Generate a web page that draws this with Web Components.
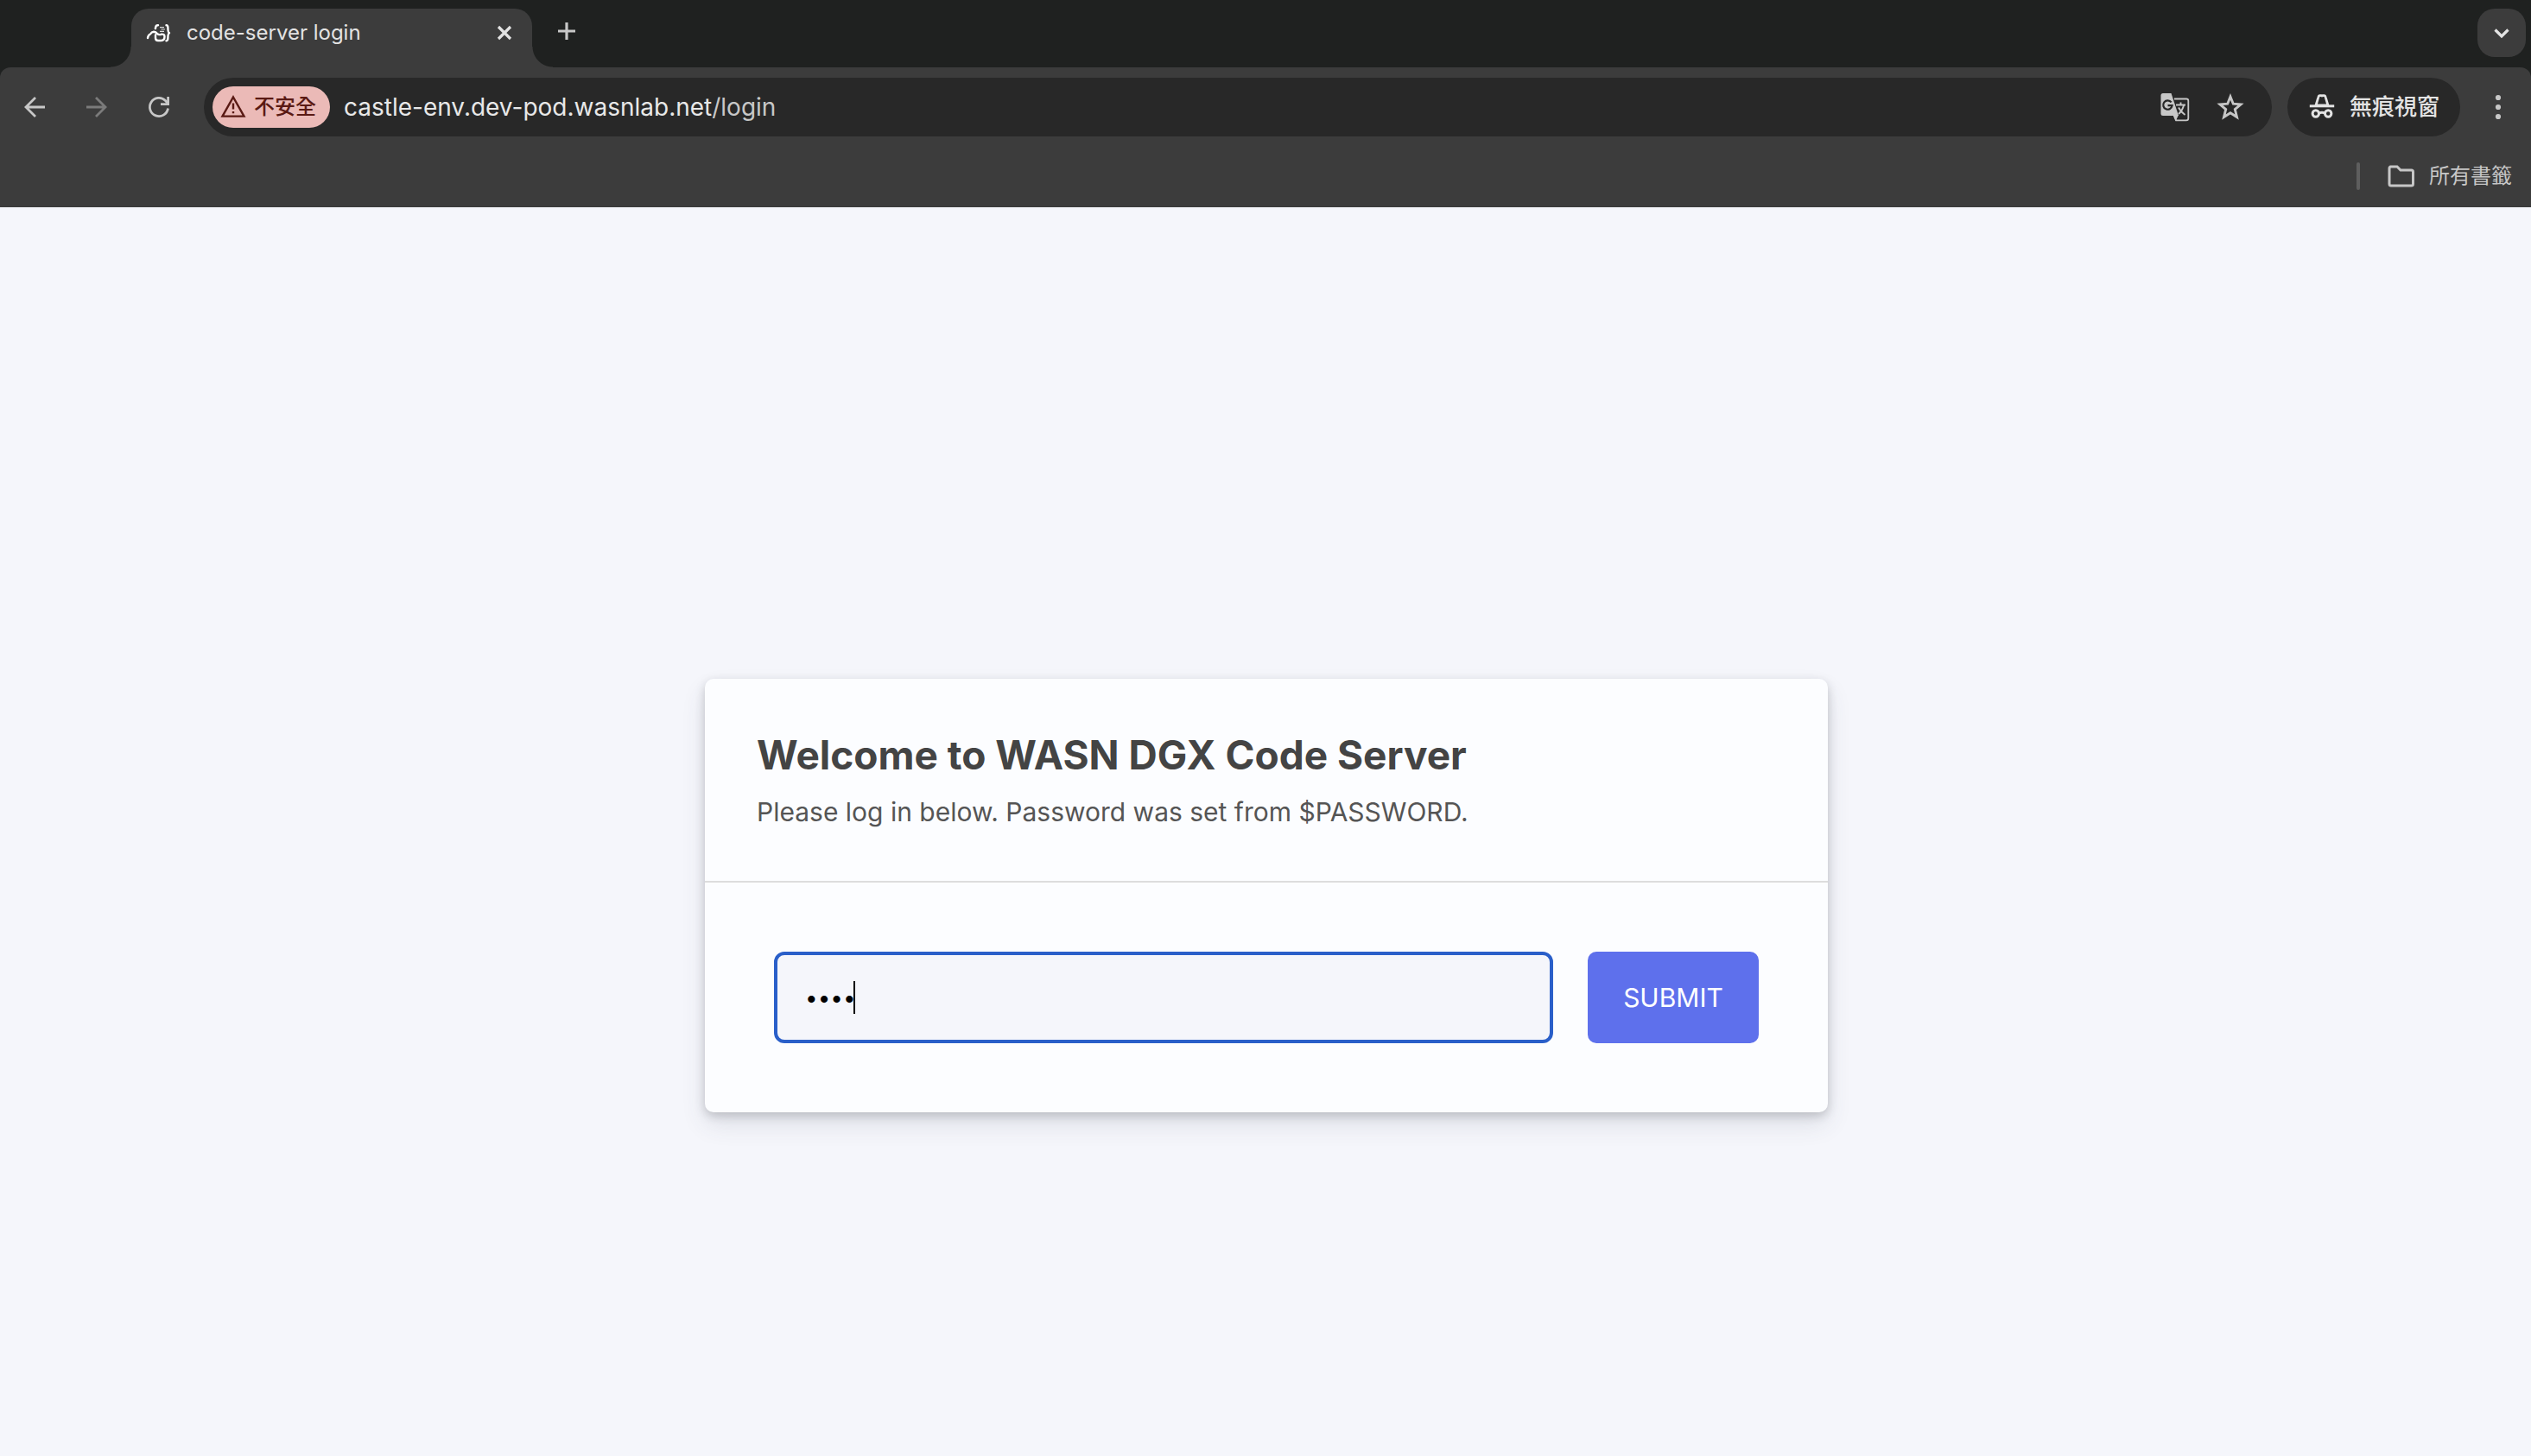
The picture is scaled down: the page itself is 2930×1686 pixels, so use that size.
<!DOCTYPE html>
<html lang="zh-Hant">
<head>
<meta charset="utf-8">
<title>code-server login</title>
<style>
html,body{margin:0;height:100%}
body{font-family:Inter,"Noto Sans CJK TC",sans-serif;background:#f5f6fb;display:flex;flex-direction:column}
</style>
</head>
<body>
<browser-tabs><browser-tab>code-server login</browser-tab></browser-tabs>
<browser-toolbar><url-bar slot="address" host="castle-env.dev-pod.wasnlab.net" path="/login">不安全</url-bar><span slot="profile">無痕視窗</span></browser-toolbar>
<bookmarks-bar>所有書籤</bookmarks-bar>
<login-page>
<login-card>
<span slot="title">Welcome to WASN DGX Code Server</span>
<span slot="hint">Please log in below. Password was set from $PASSWORD.</span>
</login-card>
</login-page>
<script>
const base = `:host,*,::before,::after{box-sizing:border-box}
button{font:inherit;color:inherit;border:0;padding:0;margin:0;background:none;display:flex;align-items:center;justify-content:center;flex:none}
ui-icon{flex:none}`;

function define(name, css, html, setup) {
  customElements.define(name, class extends HTMLElement {
    constructor() {
      super();
      this.attachShadow({mode: 'open'}).innerHTML = `<style>${base}${css}</style>${html}`;
    }
    connectedCallback() { if (setup) setup(this, this.shadowRoot); }
  });
}

const line = (d, w = 3, extra = '') => `<path d="${d}" fill="none" stroke="currentColor" stroke-width="${w}" ${extra}/>`;
const icons = {
  back: line('M30 18H8M19 7 8 18 19 29', 2.8),
  forward: line('M6 18H28M17 7 28 18 17 29', 2.8),
  reload: line('M28.500 19.500A10.600 10.600 0 1 1 25.500 10.500L28.200 13.500', 2.8) + '<path d="M30 6V16H20V13.200H27.200V6Z" fill="currentColor"/>',
  close: line('M11 11 25 25M25 11 11 25', 3.2),
  plus: line('M18 8V28M8 18H28', 3.2),
  chevron: line('M10.500 14.500 18 22 25.500 14.500', 3.2),
  more: '<g fill="currentColor"><circle cx="18" cy="7" r="3.100"/><circle cx="18" cy="18" r="3.100"/><circle cx="18" cy="29" r="3.100"/></g>',
  star: line('M18 6 21.300 14.200 30 14.900 23.300 20.600 25.500 29.500 18 24.800 10.500 29.500 12.700 20.600 6 14.900 14.700 14.200Z', 2.9),
  warning: line('M18 6.500 30.500 28.600H5.500Z', 2.4) + line('M18 13.500V20.500M18 23V25.200', 2.4),
  folder: line('M4.500 7H13L17 11H29.500Q31.500 11 31.500 13V27Q31.500 29 29.500 29H6Q4 29 4 27V9Q4 7 6 7Z', 3),
  incognito: '<path d="M11 16 13.800 6.600Q14.500 4 17 4.700L18 5 19 4.700Q21.500 4 22.200 6.600L25 16Z" fill="none" stroke="currentColor" stroke-width="2.800"/>' +
    line('M3.800 16.800H32.200', 3) + '<g fill="none" stroke="currentColor" stroke-width="3"><circle cx="10.800" cy="25.500" r="3.700"/><circle cx="25.200" cy="25.500" r="3.700"/><path d="M14.300 25Q18 23.400 21.700 25"/></g>',
  translate: '<path d="M17 8.500H31Q33.300 8.500 33.300 10.800V31Q33.300 33.300 31 33.300H19L16 26" fill="none" stroke="currentColor" stroke-width="1.800"/>' +
    '<path d="M4 2H13.500L22 28H4Q1.500 28 1.500 25.500V4.500Q1.500 2 4 2Z" fill="currentColor"/><path d="M15.500 27H22L18.800 34Z" fill="currentColor"/>' +
    '<path d="M13.600 12.400A5.200 5.200 0 1 0 14.600 16.200H9.500" fill="none" stroke="#282828" stroke-width="2.200"/>' +
    line('M19 15.500H30M24.500 12.500V15.500M28 16Q26.500 22 22 26M22 18.500Q24.500 23.500 29.500 27', 1.900),
  logo: '<g fill="none" stroke="#fff" stroke-width="2.400" stroke-linecap="round" stroke-linejoin="round"><path d="M5 24Q5.500 20.500 8 19.500Q9.500 17 12 16.800Q14.500 17 16 19Q18 20.800 20.500 19.800Q24.500 19 24.500 22.500Q24.500 27 20.500 27H17Q14 27 14 24V20.500"/><path d="M17 9.300Q14.200 9.200 14.300 11.500L13.800 13"/><path d="M26.500 9.200Q28.500 9.200 28.400 12.500Q28.400 17.500 30 18.200Q28.400 19 28.400 23.500Q28.500 27.200 26.500 27.200"/></g><path d="M19 11.600H24M20.500 14H25M19 16.400H24" stroke="#ddd" stroke-width="1.200"/>'
};

customElements.define('ui-icon', class extends HTMLElement {
  constructor() { super(); this.attachShadow({mode: 'open'}); }
  connectedCallback() {
    this.shadowRoot.innerHTML = `<style>:host{display:block;width:36px;height:36px}svg{display:block}</style><svg width="36" height="36" viewBox="0 0 36 36" aria-hidden="true">${icons[this.getAttribute('name')]}</svg>`;
  }
});

define('browser-tab', `
:host{position:relative;display:flex;align-items:center;gap:14px;width:464px;height:68px;padding:0 14px 12px;background:#3c3c3c;border-radius:20px 20px 0 0;color:#e3e3e3;font-size:24px;line-height:32px;margin-top:10px}
:host::before,:host::after{content:"";position:absolute;bottom:0;width:24px;height:24px}
:host::before{right:100%;background:radial-gradient(circle at 0 0,transparent 23px,#3c3c3c 24px)}
:host::after{left:100%;background:radial-gradient(circle at 100% 0,transparent 23px,#3c3c3c 24px)}
span{flex:1;white-space:nowrap}`,
`<ui-icon name="logo"></ui-icon><span><slot></slot></span><button aria-label="Close tab"><ui-icon name="close"></ui-icon></button>`);

define('browser-tabs', `
:host{display:flex;align-items:flex-start;background:#1f2120;height:78px;flex:none;padding:0 6px 0 152px;color:#e3e3e3}
.new{margin:18px auto 0 22px;color:#c7c7c7}
.search{width:56px;height:56px;border-radius:20px;background:#3c3c3c;margin-top:10px}`,
`<slot></slot><button class="new" aria-label="New tab"><ui-icon name="plus"></ui-icon></button><button class="search" aria-label="Search tabs"><ui-icon name="chevron"></ui-icon></button>`);

define('browser-toolbar', `
:host{display:block;flex:none;background:#1f2120;color:#c7c7c7}
.row{display:flex;align-items:center;height:92px;padding:0 20px 0 22px;background:#3c3c3c;border-radius:12px 12px 0 0}
.nav{display:flex;gap:36px;padding-right:34px}
.off{color:#7b7b7b}
slot[name=address]{display:contents}
.profile{height:68px;border-radius:34px;background:#282828;color:#e3e3e3;gap:14px;padding:0 24px 0 22px;margin:0 26px 0 18px;font-size:26px;line-height:36px;font-weight:500}`,
`<div class="row"><div class="nav"><button aria-label="Back"><ui-icon name="back"></ui-icon></button><button class="off" aria-label="Forward" disabled><ui-icon name="forward"></ui-icon></button><button aria-label="Reload"><ui-icon name="reload"></ui-icon></button></div><slot name="address"></slot><button class="profile"><ui-icon name="incognito"></ui-icon><slot name="profile"></slot></button><button aria-label="Menu"><ui-icon name="more"></ui-icon></button></div>`);

define('url-bar', `
:host{display:flex;align-items:center;flex:1;height:68px;border-radius:34px;background:#282828;padding:0 30px 0 10px}
.chip{height:48px;border-radius:24px;background:#ebbab7;color:#5a1a14;font-size:24px;line-height:32px;font-weight:500;gap:6px;padding:0 16px 0 6px}
.url{flex:1;padding-left:16px;font-size:28px;line-height:36px;white-space:nowrap;color:#c7c7c7}
.url b{font-weight:400;color:#e8e8e8}
.tools{display:flex;gap:28px}`,
`<button class="chip"><ui-icon name="warning"></ui-icon><slot></slot></button><div class="url"><b></b><span></span></div><div class="tools"><button aria-label="Translate"><ui-icon name="translate"></ui-icon></button><button aria-label="Bookmark"><ui-icon name="star"></ui-icon></button></div>`,
(el, root) => {
  root.querySelector('b').textContent = el.getAttribute('host');
  root.querySelector('.url span').textContent = el.getAttribute('path');
});

define('bookmarks-bar', `
:host{display:flex;align-items:center;justify-content:flex-end;flex:none;height:70px;background:#3c3c3c;color:#c7c7c7;font-size:24px;line-height:32px;padding:0 22px 2px 0}
i{width:4px;height:32px;border-radius:2px;background:#5e5e5e;margin-right:30px}
button{gap:14px}`,
`<i></i><button><ui-icon name="folder"></ui-icon><slot></slot></button>`);

define('login-page', `
:host{flex:1;display:flex;align-items:center;justify-content:center;padding:148px 40px 0 42px}`, `<slot></slot>`);

define('login-card', `
:host{display:block;width:100%;max-width:1300px;background:#fcfdff;border-radius:10px;color:#444;box-shadow:0 14px 28px rgba(60,66,87,.12),0 4px 12px rgba(0,0,0,.18)}
header{padding:60px;border-bottom:2px solid #ddd}
h1{margin:0;font-size:46px;line-height:56px;font-weight:700}
p{margin:18px 0 0;font-size:30px;line-height:40px;color:#555}
form{display:flex;gap:40px;padding:80px}
input{flex:1;min-width:0;height:106px;border:4px solid #2a5fc9;border-radius:12px;outline:0;padding:0 32px;font:26px/40px Inter,sans-serif;color:#000;caret-color:transparent;background:linear-gradient(#000,#000) 88px 50%/2px 38px no-repeat #f5f6fb}
button{width:198px;height:106px;border-radius:10px;background:#5e70ec;color:#fff;font-size:30px;line-height:40px}`,
`<header><h1><slot name="title"></slot></h1><p><slot name="hint"></slot></p></header><form><input type="password" aria-label="Password" value="pass" autocomplete="off"><button type="button">SUBMIT</button></form>`);
</script>
</body>
</html>
